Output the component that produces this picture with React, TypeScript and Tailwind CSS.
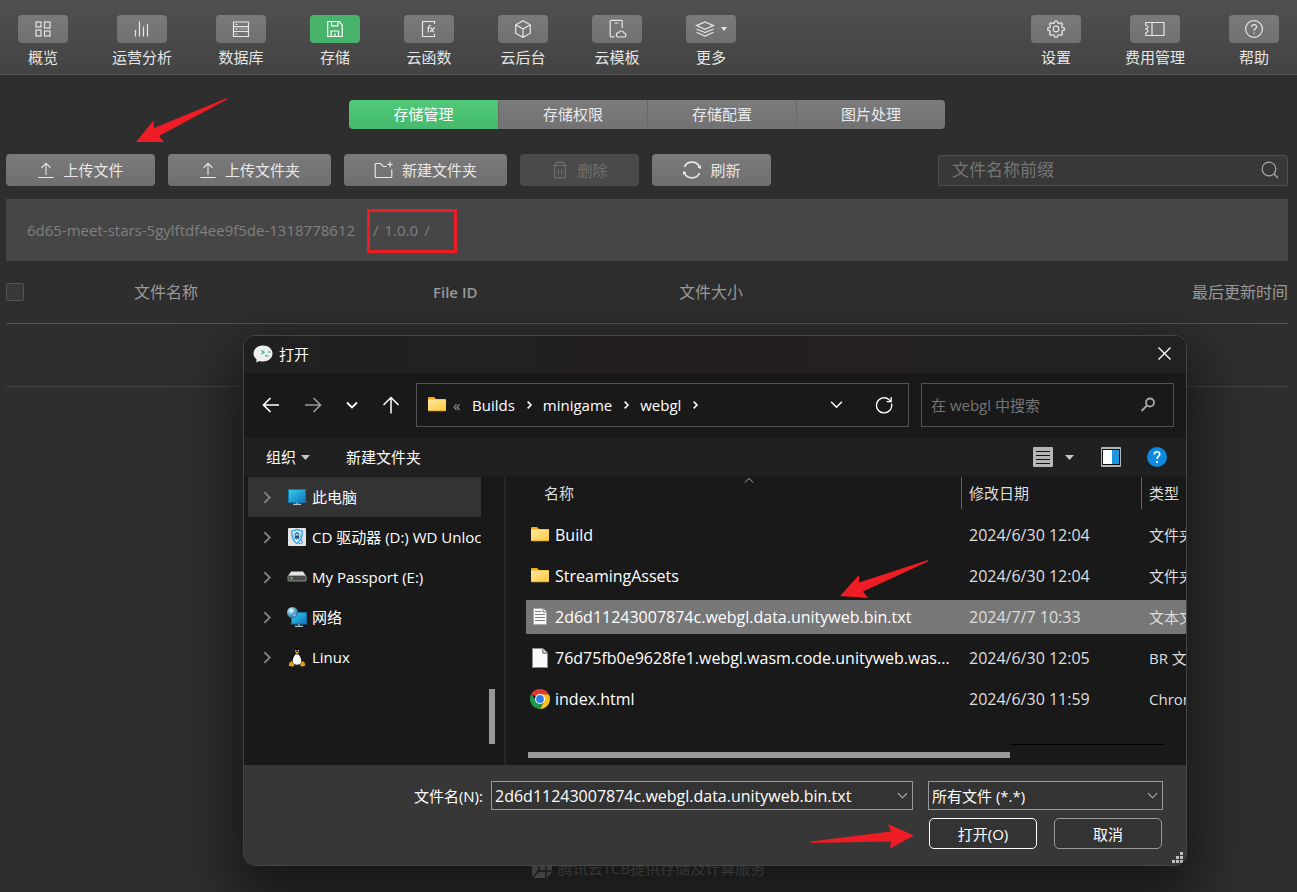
import React from "react";

const STROKE = {
  fill: "none",
  stroke: "currentColor",
  strokeWidth: 1.2,
} as const;

function Icon({
  children,
  size = 20,
}: {
  children: React.ReactNode;
  size?: number;
}) {
  return (
    <svg
      width={size}
      height={size}
      viewBox="0 0 20 20"
      className="shrink-0"
      aria-hidden="true"
      {...STROKE}
    >
      {children}
    </svg>
  );
}

const icons = {
  overview: (
    <Icon>
      <rect x="3" y="3" width="5" height="5" />
      <rect x="11.500" y="3" width="5.500" height="6" />
      <rect x="3" y="11" width="5" height="6" />
      <rect x="11.500" y="12" width="5.500" height="5" />
    </Icon>
  ),
  chart: (
    <Icon>
      <path d="M3.500 11v6.500M7.500 2.500v15M11.500 7.500v10M15.500 5v12.500" />
    </Icon>
  ),
  database: (
    <Icon>
      <path d="M2.500 3h15v14.500h-15zM2.500 7.700h15M2.500 12.500h15M4.500 5.300h2M4.500 10.100h2M4.500 15h2" />
      <path d="M8 10.100h9" opacity=".4" />
    </Icon>
  ),
  storage: (
    <Icon>
      <path d="M2.700 2.500h11.500l3 3.500v11.500H2.700zM6.500 2.800v4h6.500v-4M6 17v-5h7.500v5M10 14.500V17" />
    </Icon>
  ),
  fn: (
    <Icon>
      <path d="M15.500 15v2.500h-12v-15h12V5" />
      <path d="M12 6.500c-1.600-.4-2 .3-2.200 1.500L9 13.500M8 9h3M11.500 8.500c1.500 0 1.500 4.500 3.500 4.500M15.800 8.500l-4.800 4.500" />
    </Icon>
  ),
  cube: (
    <Icon>
      <path d="M10 1.800l7.300 4v8.400l-7.300 4-7.300-4V5.800zM2.700 5.800L10 10l7.300-4.200M10 10v8.200" />
    </Icon>
  ),
  template: (
    <Icon>
      <path d="M7.500 17.800H4.200a1 1 0 0 1-1-1V2.400a1 1 0 0 1 1-1h10a1 1 0 0 1 1 1V9M7.500 4h4" />
      <path d="M11.500 18h5.300a2 2 0 0 0 .3-4 3 3 0 0 0-5.500-.4 2.200 2.200 0 0 0-.1 4.400z" />
    </Icon>
  ),
  more: (
    <>
      <Icon>
        <path d="M10 3l8.500 3.600L10 10.300 1.500 6.600zM1.500 10l8.500 3.600 8.500-3.600M1.500 13.300L10 17l8.500-3.700" />
      </Icon>
      <svg width="6" height="4" viewBox="0 0 6 4" fill="currentColor" aria-hidden="true">
        <path d="M0 0h6L3 4z" />
      </svg>
    </>
  ),
  gear: (
    <Icon>
      <path d="M8.800 2h2.400l.5 2 1.500.6 1.800-1.100 1.600 1.600-1 1.800.6 1.500 2.100.5v2.300l-2.100.5-.6 1.500 1 1.800-1.600 1.600-1.800-1-1.500.6-.5 2H8.800l-.5-2-1.500-.6-1.800 1L3.400 15l1-1.800-.6-1.500-2-.5V8.900l2-.5.6-1.500-1-1.800L5 3.500l1.800 1.100L8.300 4z" />
      <circle cx="10" cy="10" r="2.800" />
    </Icon>
  ),
  ticket: (
    <Icon>
      <path d="M.8 3.500h18.200v13H.8v-2.800c3-1 3-2.200 0-3.700 3-1.500 3-2.700 0-3.700zM7 3.500v13" />
    </Icon>
  ),
  help: (
    <Icon>
      <circle cx="10" cy="10" r="8.400" />
      <path d="M7.600 8c.2-3.200 5-3 5-.3 0 1.900-2.500 1.900-2.500 4.100M10.100 13.400v1.400" />
    </Icon>
  ),
  upload: (
    <Icon size={18}>
      <path d="M10 15.500V2.500M5 7.500l5-5 5 5M1.500 18.300h17" />
    </Icon>
  ),
  newFolder: (
    <Icon>
      <path d="M17.800 9.500v7a1 1 0 0 1-1 1H2.200a1 1 0 0 1-1-1V4.500a1 1 0 0 1 1-1h4.500l2.500 3h3.500M16 1.800v5.400M13.300 4.500h5.400" />
    </Icon>
  ),
  trash: (
    <Icon size={18}>
      <path d="M2 5h16M5 5l1-3.500h8L15 5M4 5v13.500h12V5M8 8.500v7M12 8.500v7" />
    </Icon>
  ),
  refresh: (
    <svg width="20" height="20" viewBox="0 0 20 20" fill="none" stroke="currentColor" strokeWidth="1.700" aria-hidden="true">
      <path d="M2.500 7a8.200 8.200 0 0 1 15 0M17.500 13a8.200 8.200 0 0 1-15 0" />
      <path d="M19 5v4l-3.500-1.500zM1 15v-4l3.500 1.500z" fill="currentColor" stroke="none" />
    </svg>
  ),
};

type NavItem = { label: string; icon: React.ReactNode; active?: boolean };

const leftNav: NavItem[] = [
  { label: "概览", icon: icons.overview },
  { label: "运营分析", icon: icons.chart },
  { label: "数据库", icon: icons.database },
  { label: "存储", icon: icons.storage, active: true },
  { label: "云函数", icon: icons.fn },
  { label: "云后台", icon: icons.cube },
  { label: "云模板", icon: icons.template },
  { label: "更多", icon: icons.more },
];

const rightNav: NavItem[] = [
  { label: "设置", icon: icons.gear },
  { label: "费用管理", icon: icons.ticket },
  { label: "帮助", icon: icons.help },
];

function NavButton({ label, icon, active }: NavItem) {
  return (
    <button type="button" className="flex flex-col items-center gap-[3px] text-[15px] leading-[22px] text-[#e6e6e6]">
      <span
        className={`flex h-7 w-[50px] items-center justify-center gap-1.5 rounded ${
          active ? "bg-[#47b36b] text-white" : "bg-linear-to-b from-[#7a7a7a] to-[#707070]"
        }`}
      >
        {icon}
      </span>
      {label}
    </button>
  );
}

function ToolButton({
  label,
  icon,
  width,
  disabled,
}: {
  label: string;
  icon: React.ReactNode;
  width: string;
  disabled?: boolean;
}) {
  return (
    <button
      type="button"
      disabled={disabled}
      className={`flex h-8 items-center justify-center gap-2 rounded text-[15px] ${width} ${
        disabled ? "bg-[#4a4a4a] text-[#707070]" : "bg-linear-to-b from-[#7a7a7a] to-[#6f6f6f] text-[#e8e8e8]"
      }`}
    >
      {icon}
      {label}
    </button>
  );
}

function Folder() {
  return (
    <svg width="20" height="20" viewBox="0 0 20 20" className="shrink-0" aria-hidden="true">
      <defs>
        <linearGradient id="folder" x1="0" y1="0" x2="1" y2="1">
          <stop offset="0" stopColor="#ffe8a0" />
          <stop offset="1" stopColor="#ffc93c" />
        </linearGradient>
      </defs>
      <path d="M1 3a1 1 0 0 1 1-1h5l2 2h9a1 1 0 0 1 1 1V8H1z" fill="#f5ae1a" />
      <rect x="1" y="4.500" width="18" height="11.500" rx=".8" fill="url(#folder)" />
      <path d="M1.500 15.800h17" stroke="#e5a828" strokeWidth=".8" />
    </svg>
  );
}

function TextDoc() {
  return (
    <svg width="20" height="20" viewBox="0 0 20 20" className="shrink-0" aria-hidden="true">
      <path d="M3.500 1.500h10l3 3v13h-13z" fill="#fafafa" stroke="#a8a8a8" />
      <path d="M13 1.500v3.500h3.500" fill="none" stroke="#777" />
      <path d="M5 4.500h6.500M5 7.500h10M5 10.500h10M5 13.500h10" stroke="#7e7e7e" />
    </svg>
  );
}

function BlankDoc() {
  return (
    <svg width="20" height="20" viewBox="0 0 20 20" className="shrink-0" aria-hidden="true">
      <path d="M2.500.5H13l4.500 4.500v14.500h-15z" fill="#fafafa" stroke="#8c8c8c" />
      <path d="M12.800.8v4.400h4.400" fill="#ddd" stroke="#666" />
    </svg>
  );
}

function Chrome() {
  return (
    <svg width="20" height="20" viewBox="0 0 20 20" className="shrink-0" aria-hidden="true">
      <path d="M10 10 1.340 5A10 10 0 0 1 18.660 5z" fill="#e33b2e" />
      <path d="M10 5.500H18.900A10 10 0 0 1 10 20l4-7.700z" fill="#fcc31e" />
      <path d="M6.100 12.250 1.500 4.700A10 10 0 0 0 10 20l4-7.700z" fill="#22964a" />
      <circle cx="10" cy="10" r="5" fill="#fff" />
      <circle cx="10" cy="10" r="3.900" fill="#2f7df0" />
    </svg>
  );
}

function Monitor({ network }: { network?: boolean }) {
  return (
    <svg width="20" height="20" viewBox="0 0 20 20" className="shrink-0" aria-hidden="true">
      <defs>
        <linearGradient id="screen" x1="0" y1="0" x2="1" y2="1">
          <stop offset="0" stopColor="#35d3e6" />
          <stop offset="1" stopColor="#1070c4" />
        </linearGradient>
        <radialGradient id="globe" cx=".35" cy=".3" r=".8">
          <stop offset="0" stopColor="#d6f1fb" />
          <stop offset=".5" stopColor="#5aa7d0" />
          <stop offset="1" stopColor="#1d5f91" />
        </radialGradient>
      </defs>
      {network ? (
        <>
          <rect x="4.500" y="5.500" width="15" height="11.500" fill="url(#screen)" stroke="#1272a5" />
          <path d="M12 17v2M8 19.300h8" stroke="#b6bfc5" strokeWidth="1.200" />
          <circle cx="5.500" cy="5.500" r="5.500" fill="url(#globe)" />
          <path d="M2 3l3-1 2 2-3 2zM6 8l3-1-1 3z" fill="#e0f3f5" opacity=".6" />
        </>
      ) : (
        <>
          <rect x="1.500" y="2.500" width="17" height="13" fill="url(#screen)" stroke="#1379ac" />
          <path d="M10 15.500v1.500M6 17.300h8" stroke="#b6bfc5" strokeWidth="1.200" />
        </>
      )}
    </svg>
  );
}

function DiscShield() {
  return (
    <svg width="20" height="20" viewBox="0 0 20 20" className="shrink-0" aria-hidden="true">
      <rect x="1" y="1" width="18" height="18" rx="1" fill="#e4e4e4" />
      <path d="M10 2.500c2 1.300 3.500 1.500 5.200 1.500.3 6-1 10-5.200 12.500C5.800 14 4.500 10 4.800 4 6.500 4 8 3.800 10 2.500z" fill="#e6f3fc" stroke="#1e9bf0" strokeWidth="1.200" />
      <circle cx="10" cy="9" r="3.500" fill="none" stroke="#55b4f0" />
      <rect x="8" y="8.500" width="4" height="3" fill="#1b4a78" />
      <path d="M8.700 8.500V7.200a1.300 1.300 0 0 1 2.600 0v1.300" fill="none" stroke="#1b4a78" />
      <circle cx="13.500" cy="15" r="1.800" fill="#dff0fb" stroke="#1e8fe0" strokeWidth=".9" />
    </svg>
  );
}

function Drive() {
  return (
    <svg width="20" height="20" viewBox="0 0 20 20" className="shrink-0" aria-hidden="true">
      <path d="M4 4.500h12l3 4.500H1z" fill="#e3e3e3" />
      <rect x="1" y="8.500" width="18" height="5.500" rx=".8" fill="#4a4a4a" stroke="#a5a5a5" strokeWidth=".8" />
      <rect x="3.500" y="10.300" width="2" height="2" fill="#55e34d" />
    </svg>
  );
}

function Penguin() {
  return (
    <svg width="20" height="20" viewBox="0 0 20 20" className="shrink-0" aria-hidden="true">
      <path d="M7 4c0-5 6-5 6 0 0 3 4 6 4 11l-3 3H6l-3-3c0-5 4-8 4-11z" fill="#0a0a0a" stroke="#3c3c3c" strokeWidth=".4" />
      <path d="M8 7.500h4c1 2.500 2.800 4 2.300 8-1.500 3-7 3-8.500 0C5.300 11.500 7 10 8 7.500z" fill="#fff" />
      <circle cx="8.700" cy="3.800" r=".8" fill="#ddd" />
      <circle cx="11.300" cy="3.800" r=".8" fill="#ddd" />
      <path d="M8 5.500l2-1 2 1-2 1.700z" fill="#e8a91a" />
      <path d="M2.500 15.500l2-1.500 3 4-1.500 1.800-4.300-1zM17.500 15.500l-2-1.500-2.500 4 1.500 1.800 4-1.300z" fill="#dea21b" />
    </svg>
  );
}

function ChatLogo() {
  return (
    <svg width="20" height="18" viewBox="0 0 20 18" className="shrink-0" aria-hidden="true">
      <path d="M10 .5c5.300 0 9.500 3.500 9.500 8s-4.200 8-9.500 8c-1.300 0-2.500-.2-3.600-.6L3.300 17.500l.3-3C1.700 13 .5 10.900.5 8.500c0-4.500 4.200-8 9.500-8z" fill="#eee" />
      <path d="M8.500 5.500L11 7.200 8.500 9M12 10.800h3.500" fill="none" stroke="#1fbf6b" strokeWidth="1.300" />
      <circle cx="16.300" cy="7" r="1" fill="#1fbf6b" />
    </svg>
  );
}

function Chevron({
  direction,
  size = 12,
  width = 1.6,
}: {
  direction: "up" | "right" | "down";
  size?: number;
  width?: number;
}) {
  const paths = {
    up: "M1 9l5-5 5 5",
    right: "M4 1l5 5-5 5",
    down: "M1 3.500l5 5 5-5",
  };
  return (
    <svg width={size} height={size} viewBox="0 0 12 12" fill="none" stroke="currentColor" strokeWidth={width} className="shrink-0" aria-hidden="true">
      <path d={paths[direction]} />
    </svg>
  );
}

function Caret() {
  return (
    <svg width="9" height="5" viewBox="0 0 9 5" fill="#c8c8c8" aria-hidden="true">
      <path d="M0 0h9L4.500 5z" />
    </svg>
  );
}

const places = [
  { label: "此电脑", icon: <Monitor />, active: true },
  { label: "CD 驱动器 (D:) WD Unlocker", icon: <DiscShield /> },
  { label: "My Passport (E:)", icon: <Drive /> },
  { label: "网络", icon: <Monitor network /> },
  { label: "Linux", icon: <Penguin /> },
];

const files = [
  { name: "Build", date: "2024/6/30 12:04", type: "文件夹", icon: <Folder /> },
  { name: "StreamingAssets", date: "2024/6/30 12:04", type: "文件夹", icon: <Folder /> },
  {
    name: "2d6d11243007874c.webgl.data.unityweb.bin.txt",
    date: "2024/7/7 10:33",
    type: "文本文档",
    icon: <TextDoc />,
    selected: true,
  },
  {
    name: "76d75fb0e9628fe1.webgl.wasm.code.unityweb.was...",
    date: "2024/6/30 12:05",
    type: "BR 文件",
    icon: <BlankDoc />,
  },
  { name: "index.html", date: "2024/6/30 11:59", type: "Chrome HTML", icon: <Chrome /> },
];

function NavigationBar() {
  return (
    <div className="flex h-[65px] items-center bg-[#191919] pr-3 pb-0.5 pl-[18px]">
      <div className="flex w-[154px] items-center gap-6">
        <button type="button" aria-label="后退">
          <svg width="18" height="18" viewBox="0 0 18 18" fill="none" stroke="#fff" strokeWidth="1.700" aria-hidden="true">
            <path d="M17 9H1.500M8.500 2L1.500 9l7 7" />
          </svg>
        </button>
        <button type="button" aria-label="前进">
          <svg width="18" height="18" viewBox="0 0 18 18" fill="none" stroke="#9b9b9b" strokeWidth="1.700" aria-hidden="true">
            <path d="M1 9h15.500M9.500 2l7 7-7 7" />
          </svg>
        </button>
        <button type="button" aria-label="最近位置">
          <Chevron direction="down" width={1.8} />
        </button>
        <button type="button" aria-label="上移">
          <svg width="18" height="18" viewBox="0 0 18 18" fill="none" stroke="#fff" strokeWidth="1.500" aria-hidden="true">
            <path d="M9 17.500V1.500M1.500 9L9 1.500 16.500 9" />
          </svg>
        </button>
      </div>
      <div className="flex h-11 flex-1 items-center border border-[#535353] pr-[15px] pl-2.5">
        <Folder />
        <span className="ml-1.5 w-[19px] text-[#999]">«</span>
        <nav className="flex items-center gap-2.5">
          <a href="#builds">Builds</a>
          <Chevron direction="right" size={8} width={2.4} />
          <a href="#minigame">minigame</a>
          <Chevron direction="right" size={8} width={2.4} />
          <a href="#webgl">webgl</a>
          <Chevron direction="right" size={8} width={2.4} />
        </nav>
        <div className="ml-auto flex items-center gap-8">
          <button type="button" aria-label="展开">
            <Chevron direction="down" size={13} width={1.4} />
          </button>
          <button type="button" aria-label="刷新">
            <svg width="18" height="18" viewBox="0 0 18 18" fill="none" stroke="#fff" strokeWidth="1.300" aria-hidden="true">
              <path d="M16.500 7.500a7.600 7.600 0 1 1-2.300-3.800L16 5.500M16.200 1v4.700h-4.500" />
            </svg>
          </button>
        </div>
      </div>
      <label className="ml-3 flex h-11 w-[253px] items-center border border-[#535353] pr-4 pl-[9px]">
        <input
          aria-label="在 webgl 中搜索"
          placeholder="在 webgl 中搜索"
          className="min-w-0 flex-1 bg-transparent outline-none placeholder:text-[#757575]"
        />
        <svg width="18" height="18" viewBox="0 0 18 18" fill="none" stroke="#aaa" strokeWidth="1.800" aria-hidden="true">
          <circle cx="11" cy="6.500" r="4" />
          <path d="M8 9.500l-5.500 5.500" />
        </svg>
      </label>
    </div>
  );
}

function CommandBar() {
  return (
    <div className="flex h-[38px] items-center bg-[#202020] pr-[19px] pl-[22px]">
      <button type="button" className="flex items-center gap-[5px]">
        组织
        <Caret />
      </button>
      <button type="button" className="ml-9">
        新建文件夹
      </button>
      <div className="ml-auto flex items-center">
        <button type="button" aria-label="更改视图" className="flex items-center gap-3">
          <svg width="20" height="20" viewBox="0 0 20 20" aria-hidden="true">
            <rect width="20" height="20" rx="1" fill="#b5b5b5" />
            <path d="M3 4.500h14M3 8.500h14M3 12.500h14M3 16.500h14" stroke="#111" />
          </svg>
          <Caret />
        </button>
        <button type="button" aria-label="预览窗格" className="ml-[27px]">
          <svg width="20" height="20" viewBox="0 0 20 20" aria-hidden="true">
            <rect width="20" height="20" rx="1" fill="#b5b5b5" />
            <rect x="1" y="2" width="18" height="16" fill="#111" />
            <rect x="2" y="3" width="9" height="14" fill="#fff" />
            <rect x="11" y="3" width="7" height="14" fill="#1b96e0" />
          </svg>
        </button>
        <button type="button" aria-label="帮助" className="ml-[26px]">
          <svg width="20" height="20" viewBox="0 0 20 20" fill="none" aria-hidden="true">
            <circle cx="10" cy="10" r="10" fill="#0d8be0" />
            <path d="M7.300 7.500c0-3.700 5.400-3.500 5.400-.3 0 2.200-2.700 2.300-2.700 4.900M10 14v2" stroke="#fff" strokeWidth="1.700" />
          </svg>
        </button>
      </div>
    </div>
  );
}

function FileTable() {
  return (
    <div className="min-w-0 flex-1 overflow-hidden pt-px pl-5">
      <table className="w-[760px] table-fixed border-separate border-spacing-0 text-left">
        <colgroup>
          <col className="w-[435px]" />
          <col className="w-[180px]" />
          <col />
        </colgroup>
        <thead>
          <tr className="h-[41px] align-top text-[#dedede]">
            <th className="relative p-0 pl-[18px] font-normal">
              <span className="flex h-8 items-center">名称</span>
              <span className="absolute -top-0.5 left-[218px] text-[#aaa]">
                <Chevron direction="up" size={10} width={1.2} />
              </span>
            </th>
            <th className="p-0 font-normal">
              <span className="flex h-8 items-center border-l border-[#636363] pl-[7px]">修改日期</span>
            </th>
            <th className="p-0 font-normal">
              <span className="flex h-8 items-center border-l border-[#636363] pl-[7px]">类型</span>
            </th>
          </tr>
        </thead>
        <tbody>
          {files.map((file) => (
            <tr
              key={file.name}
              className={`h-[41px] *:border-b-[7px] *:border-transparent *:bg-clip-padding *:p-0 *:whitespace-nowrap ${
                file.selected ? "*:bg-[#777777]" : ""
              }`}
            >
              <td>
                <span className="flex items-center gap-[5px] pl-1 text-base leading-5 text-white">
                  {file.icon}
                  {file.name}
                </span>
              </td>
              <td>
                <span className="block pl-2 text-base leading-5 text-[#dedede]">{file.date}</span>
              </td>
              <td>
                <span className="block pl-2 text-[#dedede]">{file.type}</span>
              </td>
            </tr>
          ))}
        </tbody>
      </table>
      <div className="mt-[21px] mr-[22px] ml-0.5 flex h-[15px]">
        <div className="mt-2 h-1.5 w-[482px] bg-[#989898]" />
        <div className="h-px flex-1 bg-black" />
      </div>
    </div>
  );
}

function OpenDialog() {
  return (
    <section
      role="dialog"
      aria-label="打开"
      className="absolute top-[335px] left-[243px] w-[944px] overflow-hidden rounded-xl border border-[#454545] bg-[#191919] text-[15px] leading-5 text-white shadow-[0_24px_56px_12px_rgba(0,0,0,0.5)]"
    >
      <div className="flex h-[37px] items-center gap-1.5 bg-linear-to-r from-[#202022] via-[#241f1e] to-[#212121] pr-[15px] pb-0.5 pl-[9px]">
        <ChatLogo />
        <h2>打开</h2>
        <button type="button" aria-label="关闭" className="ml-auto">
          <svg width="13" height="13" viewBox="0 0 13 13" stroke="#fff" strokeWidth="1.300" aria-hidden="true">
            <path d="M.5.5l12 12M12.500.5l-12 12" />
          </svg>
        </button>
      </div>
      <NavigationBar />
      <CommandBar />
      <div className="flex h-[289px]">
        <ul className="w-[241px] pt-px pl-1">
          {places.map((place) => (
            <li key={place.label}>
              <button
                type="button"
                className={`flex h-10 w-[233px] items-center overflow-hidden pl-3 whitespace-nowrap ${
                  place.active ? "bg-[#333333]" : ""
                }`}
              >
                <span className="mr-3.5 text-[#808080]">
                  <Chevron direction="right" size={13} width={1.8} />
                </span>
                {place.icon}
                <span className="ml-[5px]">{place.label}</span>
              </button>
            </li>
          ))}
        </ul>
        <div className="flex w-[21px] items-end border-r-2 border-[#262626] pb-[21px] pl-1">
          <div className="h-[55px] w-1.5 bg-[#989898]" />
        </div>
        <FileTable />
      </div>
      <form className="relative flex flex-col items-end gap-2 bg-[#373737] pt-4 pr-[23px] pb-4">
        <div className="flex items-center">
          <label htmlFor="filename" className="mr-2">
            文件名(N):
          </label>
          <div className="flex h-[29px] w-[422px] items-center border border-[#9a9a9a] bg-[#333333] pr-1 pl-[3px]">
            <input
              id="filename"
              defaultValue="2d6d11243007874c.webgl.data.unityweb.bin.txt"
              className="min-w-0 flex-1 bg-transparent text-base leading-5 outline-none"
            />
            <span className="text-[#b5b5b5]">
              <Chevron direction="down" size={11} width={1.2} />
            </span>
          </div>
          <div className="relative ml-[15px]">
            <select
              aria-label="文件类型"
              className="block h-[29px] w-[235px] appearance-none border border-[#9a9a9a] bg-[#333333] pl-[3px] outline-none"
            >
              <option>所有文件 (*.*)</option>
            </select>
            <span className="pointer-events-none absolute top-[9px] right-[5px] text-[#b5b5b5]">
              <Chevron direction="down" size={11} width={1.2} />
            </span>
          </div>
        </div>
        <div className="flex gap-[17px] pr-px">
          <button type="button" className="h-[31px] w-[108px] rounded-[5px] border border-white bg-[#333333]">
            打开(O)
          </button>
          <button type="button" className="h-[31px] w-[108px] rounded-[5px] border border-[#9a9a9a] bg-[#333333]">
            取消
          </button>
        </div>
        <svg width="11" height="11" viewBox="0 0 11 11" fill="#c0c0c0" className="absolute right-[3px] bottom-[2px]" aria-hidden="true">
          <path d="M8 0h3v3H8zM8 4h3v3H8zM8 8h3v3H8zM4 4h3v3H4zM4 8h3v3H4zM0 8h3v3H0z" />
        </svg>
      </form>
    </section>
  );
}

function Annotations() {
  return (
    <>
      <svg width="94" height="46" viewBox="0 0 94 46" fill="#ee1c24" className="absolute top-[97px] left-[135px]" aria-hidden="true">
        <path d="M92 1L19 31l-.5-7.500L1 45h28l-5-6L92 2.500z" />
      </svg>
      <svg width="90" height="40" viewBox="0 0 90 40" fill="#ee1c24" className="absolute top-[559px] left-[839px]" aria-hidden="true">
        <path d="M89 1L20 23.500V16L1 37l28 2-5-6.500L89 2.500z" />
      </svg>
      <svg width="104" height="26" viewBox="0 0 104 26" fill="#ee1c24" className="absolute top-[823px] left-[811px]" aria-hidden="true">
        <path d="M0 18.500L80 8.500 77 1l26 11.500L79 25.500l1-7L0 20z" />
      </svg>
    </>
  );
}

export default function App() {
  return (
    <div className="relative flex min-h-screen flex-col overflow-hidden bg-[#2e2e2e] font-['Open_Sans','Noto_Sans_CJK_SC',sans-serif]">
      <header className="flex h-[75px] shrink-0 items-start gap-11 border-b border-[#525252] bg-linear-to-b from-[#505050] to-[#434343] px-[18px] pt-[15px]">
        {leftNav.map((item) => (
          <NavButton key={item.label} {...item} />
        ))}
        <div className="ml-auto flex gap-11">
          {rightNav.map((item) => (
            <NavButton key={item.label} {...item} />
          ))}
        </div>
      </header>

      <main className="flex flex-col pr-[9px] pl-1.5">
        <div className="mx-auto mt-[25px] grid h-[29px] w-[596px] grid-cols-4 overflow-hidden rounded text-[15px] text-[#eaeaea]">
          <button type="button" className="bg-linear-to-b from-[#4fc978] to-[#47b96c] text-white">
            存储管理
          </button>
          {["存储权限", "存储配置", "图片处理"].map((tab) => (
            <button key={tab} type="button" className="border-l border-[#696969] bg-linear-to-b from-[#7b7b7b] to-[#727272]">
              {tab}
            </button>
          ))}
        </div>

        <div className="mt-[25px] flex items-center gap-[13px]">
          <ToolButton label="上传文件" icon={icons.upload} width="w-[149px]" />
          <ToolButton label="上传文件夹" icon={icons.upload} width="w-[163px]" />
          <ToolButton label="新建文件夹" icon={icons.newFolder} width="w-[163px]" />
          <ToolButton label="删除" icon={icons.trash} width="w-[119px]" disabled />
          <ToolButton label="刷新" icon={icons.refresh} width="w-[119px]" />
          <label className="ml-auto flex h-[31px] w-[350px] items-center rounded-[3px] border border-[#505050] bg-[#383838] pr-2 pl-[13px]">
            <input
              aria-label="文件名称前缀"
              placeholder="文件名称前缀"
              className="min-w-0 flex-1 bg-transparent text-[17px] text-white outline-none placeholder:text-[#757575]"
            />
            <svg width="18" height="18" viewBox="0 0 18 18" fill="none" stroke="#aaa" strokeWidth="1.200" aria-hidden="true">
              <circle cx="8" cy="8" r="6.800" />
              <path d="M13 13l4 4" />
            </svg>
          </label>
        </div>

        <div className="mt-[13px] flex h-[62px] items-center bg-[#464646] pl-[21px] text-[15px] text-[#808080]">
          <a href="#root">6d65-meet-stars-5gylftdf4ee9f5de-1318778612</a>
          <span className="relative ml-[18px] flex gap-1.5">
            / <a href="#version">1.0.0</a> /
            <span className="absolute -top-2.5 -left-1.5 h-11 w-[90px] border-3 border-[#ee1c24]" />
          </span>
        </div>

        <table className="w-full table-fixed text-left text-base text-[#999999]">
          <colgroup>
            <col className="w-[128px]" />
            <col className="w-[299px]" />
            <col className="w-[246px]" />
            <col />
          </colgroup>
          <thead>
            <tr className="h-[62px] border-b border-[#555555]">
              <th className="p-0">
                <input
                  type="checkbox"
                  aria-label="全选"
                  className="block size-[18px] appearance-none rounded-[2px] border border-[#555555] bg-[#383838]"
                />
              </th>
              <th className="p-0 font-normal">文件名称</th>
              <th className="p-0 text-[15px] font-semibold">File ID</th>
              <th className="p-0 font-normal">
                <span className="flex justify-between">
                  文件大小 <span>最后更新时间</span>
                </span>
              </th>
            </tr>
          </thead>
          <tbody>
            <tr className="h-[63px] border-b border-[#444444]">
              <td colSpan={4} />
            </tr>
          </tbody>
        </table>
      </main>

      <footer className="mt-auto flex items-center justify-center gap-1.5 pb-[13px] text-[15px] leading-[22px] text-[#606060]">
        <svg width="20" height="20" viewBox="0 0 20 20" aria-hidden="true">
          <path d="M0 0h20v14l-5 6H0z" fill="#707070" />
          <path d="M7 0v14M14 0v14M5 6h15M5 13h15M0 20l6-6M14 20v-6" stroke="#2b2b2b" strokeWidth="1.400" />
        </svg>
        腾讯云TCB提供存储及计算服务
      </footer>

      <OpenDialog />
      <Annotations />
    </div>
  );
}
